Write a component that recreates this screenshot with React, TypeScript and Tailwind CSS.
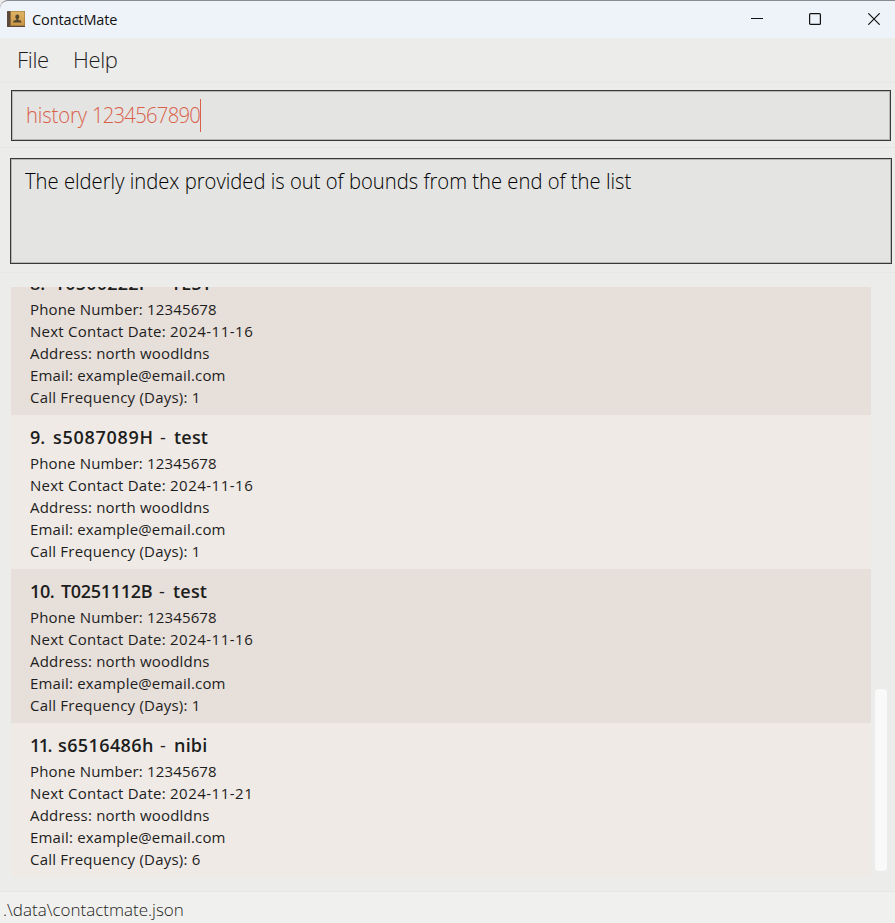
type Contact = {
  index: number;
  id: string;
  name: string;
  date: string;
  days: number;
  indexClass: string;
  idClass: string;
};

const contacts: Contact[] = [
  { index: 8, id: 'T0500222F', name: 'TEST', date: '2024-11-16', days: 1, indexClass: 'w-[25px]', idClass: 'w-[102px] tracking-[0.2px]' },
  { index: 9, id: 's5087089H', name: 'test', date: '2024-11-16', days: 1, indexClass: 'w-[23px]', idClass: 'w-[107px] tracking-[0.7px]' },
  { index: 10, id: 'T0251112B', name: 'test', date: '2024-11-16', days: 1, indexClass: 'w-[31px] tracking-[-0.4px]', idClass: 'w-[98px] tracking-[-0.3px]' },
  { index: 11, id: 's6516486h', name: 'nibi', date: '2024-11-21', days: 6, indexClass: 'w-[28px] tracking-[-1.5px]', idClass: 'w-[102px] tracking-[0.4px]' },
];

function BookIcon() {
  return (
    <svg className="ml-[7px] h-[18px] w-[18px] shrink-0" viewBox="0 0 18 18">
      <defs>
        <linearGradient id="cover" x1="0" y1="0" x2="0" y2="1">
          <stop offset="0" stopColor="#dfb565" />
          <stop offset="1" stopColor="#c99545" />
        </linearGradient>
      </defs>
      <rect x="0" y="1" width="18" height="16" rx="0.5" fill="#5b4a3c" />
      <rect x="3" y="1" width="15" height="15" fill="#8d6a38" />
      <rect x="4" y="1.500" width="13.500" height="14" fill="url(#cover)" />
      <path d="M10.300 4.500a2 2.200 0 0 0-2 2.200c0 1 .5 1.600 1 2.100v1.200c-1.600.2-3 .6-3.300 2.500h8.600c-.3-1.900-1.700-2.300-3.300-2.500v-1.200c.5-.5 1-1.100 1-2.100a2 2.200 0 0 0-2-2.200z" fill="#54452f" />
    </svg>
  );
}

function TitleBar() {
  return (
    <header className="flex h-[38px] items-center rounded-tl-lg border-t border-[#8a8b90] bg-[#eef3f9] pb-px">
      <BookIcon />
      <span className="ml-[7px] pt-px text-[14.5px] leading-5 tracking-[-0.1px] text-[#111]">ContactMate</span>
      <div className="ml-auto flex items-center pr-[15px]">
        <svg className="h-3 w-3" viewBox="0 0 12 12"><path d="M0 5.500h12" stroke="#111" strokeWidth="1" /></svg>
        <svg className="ml-[46px] h-3 w-3" viewBox="0 0 12 12"><rect x="0.600" y="0.600" width="10.800" height="10.800" rx="1" fill="none" stroke="#111" strokeWidth="1.200" /></svg>
        <svg className="ml-[47px] h-3 w-3" viewBox="0 0 12 12"><path d="M.3.3l11.400 11.400M11.700.3L.3 11.700" stroke="#111" strokeWidth="1.200" /></svg>
      </div>
    </header>
  );
}

function ContactCell({ contact }: { contact: Contact }) {
  const shade = contact.index % 2 === 0 ? 'bg-[#e7dfda]' : 'bg-[#efeae6]';
  return (
    <li className={`h-[154px] shrink-0 pl-[19px] pt-[9px] text-[15px] leading-[22px] text-[#1d1d1d] ${shade}`}>
      <h2 className="flex h-[28px] items-start whitespace-pre text-[18px] font-semibold leading-[27px]">
        <span className={contact.indexClass}>{contact.index}.</span>
        <span className={contact.idClass}>{contact.id}</span>
        <span className="w-[14px] font-normal">-</span>
        <span className="tracking-[0.2px]">{contact.name}</span>
      </h2>
      <p className="tracking-[0.16px]">Phone Number: 12345678</p>
      <p className="tracking-[0.24px]">Next Contact Date: <span className="tracking-[0.5px]">{contact.date}</span></p>
      <p className="tracking-[0.18px]">Address: north woodldns</p>
      <p className="tracking-[0.17px]">Email: example@email.com</p>
      <p className="tracking-[0.22px]">Call Frequency (Days): {contact.days}</p>
    </li>
  );
}

export default function App() {
  return (
    <div className="flex h-[923px] w-[895px] flex-col overflow-hidden bg-[#ececea] font-['Open_Sans','Noto_Sans',sans-serif]">
      <TitleBar />
      <nav className="flex h-[44px] items-center gap-[24px] pb-[2px] pl-[17px] text-[22px] font-light tracking-[-0.3px] text-[#1d1d1d]">
        <span>File</span>
        <span>Help</span>
      </nav>
      <div className="h-[66px] border-y border-[#e7e7e5] pl-[11px] pr-[4px] pt-[7px]">
        <div className="flex h-[51px] items-center border border-[#383838] bg-[#e4e4e2] pl-[14px] shadow-[inset_0_0_0_1px_#b8b8b5]">
          <span className="w-[174px] origin-left scale-x-[0.92] whitespace-pre pb-[2px] text-[22px] font-light tracking-[-0.15px] text-[#d9604a]">history <span className="tracking-[-0.8px]">1234567890</span></span>
          <span className="h-[33px] w-px bg-[#d9604a]" />
        </div>
      </div>
      <div className="h-[125px] border-b border-[#e7e7e5] pl-[10px] pr-[3px] pt-[10px]">
        <div className="h-[106px] border border-[#383838] bg-[#e4e4e2] pl-[13.5px] pt-[5px] text-[22px] font-light leading-[32px] text-black shadow-[inset_0_0_0_1px_#b8b8b5]">
          <p className="origin-left scale-x-[0.919]">The elderly index provided is out of bounds from the end of the list</p>
        </div>
      </div>
      <main className="flex h-[618px] pl-[11px] pt-[14px]">
        <ul className="flex h-[590px] w-[860px] flex-col justify-end overflow-hidden">
          {contacts.map((c) => <ContactCell key={c.index} contact={c} />)}
        </ul>
        <div className="ml-[4px] mt-[402px] h-[182px] w-[12px] rounded bg-[#f9f9f9]" />
      </main>
      <footer className="flex h-[32px] items-center border-t border-[#e7e7e5] bg-[#f0f0ee] pl-[3px] pt-[5px] text-[17px] font-light text-[#1d1d1d]">
        {'.\\data\\contactmate.json'}
      </footer>
    </div>
  );
}
